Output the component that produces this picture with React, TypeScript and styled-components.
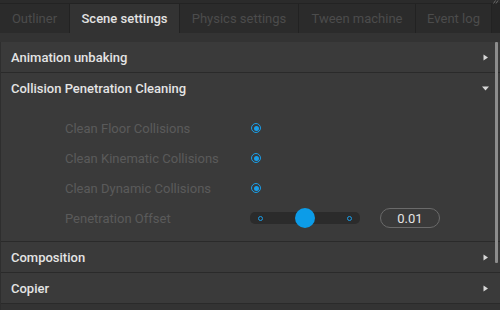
import React from "react";
import styled, { createGlobalStyle } from "styled-components";

const Global = createGlobalStyle`
  html, body { margin: 0; padding: 0; background: #333333; }
  body { font-family: Roboto, "Noto Sans", Arial, sans-serif; }
  * { box-sizing: border-box; }
`;

const Shell = styled.div`
  width: 500px;
  height: 310px;
  overflow: hidden;
  background: #333333;
  display: flex;
  flex-direction: column;
  position: relative;
`;

const TopStrip = styled.div`
  height: 4px;
  background: #2b2b2b;
  border-bottom: 1px solid #232323;
  flex: none;
`;

const TabBar = styled.div`
  height: 29px;
  display: flex;
  background: #262626;
  flex: none;
`;

const Tab = styled.div<{ $active?: boolean; $w: number }>`
  width: ${(p) => p.$w}px;
  height: 100%;
  display: flex;
  align-items: center;
  justify-content: center;
  font-size: 13px;
  font-weight: ${(p) => (p.$active ? 500 : 400)};
  color: ${(p) => (p.$active ? "#e2e2e2" : "#4c4c4c")};
  background: ${(p) => (p.$active ? "#333333" : "#2b2b2b")};
  border-right: 1px solid #222222;
  white-space: nowrap;
`;

const Gap = styled.div`
  height: 9px;
  background: #333333;
  flex: none;
`;

const Panel = styled.div`
  position: relative;
  flex: 1;
  border-left: 1px solid #2e2e2e;
  background: #333333;
`;

const Section = styled.div`
  background: #3a3a3a;
  border-bottom: 1px solid #2a2a2a;
`;

const Header = styled.div`
  height: 30px;
  display: flex;
  align-items: center;
  justify-content: space-between;
  padding: 0 10px 0 10px;
  font-size: 13px;
  font-weight: 500;
  color: #e4e4e4;
`;

const Arrow = styled.svg`
  display: block;
  margin-right: 1px;
`;

const Body = styled.div`
  padding: 10px 0 8px 64px;
  display: grid;
  grid-template-columns: 185px 1fr;
  grid-auto-rows: 30px;
  align-items: center;
`;

const Label = styled.div`
  font-size: 13px;
  color: #5a5a5a;
`;

const Radio = styled.div`
  width: 10px;
  height: 10px;
  border-radius: 50%;
  border: 1.5px solid #1a9ee8;
  display: flex;
  align-items: center;
  justify-content: center;
  margin-left: 1px;
  &::after {
    content: "";
    width: 5px;
    height: 5px;
    border-radius: 50%;
    background: #1a9ee8;
  }
`;

const SliderRow = styled.div`
  display: flex;
  align-items: center;
  gap: 20px;
`;

const Track = styled.div`
  position: relative;
  width: 110px;
  height: 12px;
  border-radius: 5px;
  background: #2b2b2b;
  display: flex;
  align-items: center;
  justify-content: space-between;
  padding: 0 8px;
`;

const Tick = styled.div`
  width: 5px;
  height: 5px;
  border-radius: 50%;
  border: 1px solid #1a9ee8;
`;

const Thumb = styled.div`
  position: absolute;
  left: 45px;
  top: -4px;
  width: 20px;
  height: 20px;
  border-radius: 50%;
  background: #0c9ce8;
`;

const NumberBox = styled.div`
  width: 60px;
  height: 20px;
  border: 1px solid #6a6a6a;
  border-radius: 10px;
  display: flex;
  align-items: center;
  justify-content: center;
  font-size: 13px;
  color: #e4e4e4;
`;

const Scrollbar = styled.div`
  position: absolute;
  right: 2px;
  top: 0;
  width: 3px;
  height: 221px;
  background: #8c8c8c;
  border-radius: 1px;
`;

const CornerGlyph = styled.svg`
  position: absolute;
  right: 1px;
  top: 0;
`;

const RightArrow = () => (
  <Arrow width="6" height="7" viewBox="0 0 6 7">
    <path d="M0.5 0.5 L5 3.5 L0.5 6.5 Z" fill="#d8d8d8" />
  </Arrow>
);

const DownArrow = () => (
  <Arrow width="7" height="5" viewBox="0 0 7 5">
    <path d="M0 0.5 L7 0.5 L3.5 4.5 Z" fill="#d8d8d8" />
  </Arrow>
);

const tabs = [
  { name: "Outliner", w: 70 },
  { name: "Scene settings", w: 110, active: true },
  { name: "Physics settings", w: 119 },
  { name: "Tween machine", w: 117 },
  { name: "Event log", w: 76 },
];

export default function App() {
  return (
    <>
      <Global />
      <Shell>
        <CornerGlyph width="6" height="4" viewBox="0 0 6 4">
          <path d="M0.5 3.5 L2.5 0.5 M3 3.5 L5 0.5" stroke="#777" strokeWidth="0.8" fill="none" />
        </CornerGlyph>
        <TopStrip />
        <TabBar>
          {tabs.map((t) => (
            <Tab key={t.name} $w={t.w} $active={t.active}>
              {t.name}
            </Tab>
          ))}
        </TabBar>
        <Gap />
        <Panel>
          <Section>
            <Header>
              Animation unbaking
              <RightArrow />
            </Header>
          </Section>
          <Section>
            <Header>
              Collision Penetration Cleaning
              <DownArrow />
            </Header>
            <Body>
              <Label>Clean Floor Collisions</Label>
              <Radio />
              <Label>Clean Kinematic Collisions</Label>
              <Radio />
              <Label>Clean Dynamic Collisions</Label>
              <Radio />
              <Label>Penetration Offset</Label>
              <SliderRow>
                <Track>
                  <Tick />
                  <Thumb />
                  <Tick />
                </Track>
                <NumberBox>0.01</NumberBox>
              </SliderRow>
            </Body>
          </Section>
          <Section>
            <Header>
              Composition
              <RightArrow />
            </Header>
          </Section>
          <Section>
            <Header>
              Copier
              <RightArrow />
            </Header>
          </Section>
          <Scrollbar />
        </Panel>
      </Shell>
    </>
  );
}
